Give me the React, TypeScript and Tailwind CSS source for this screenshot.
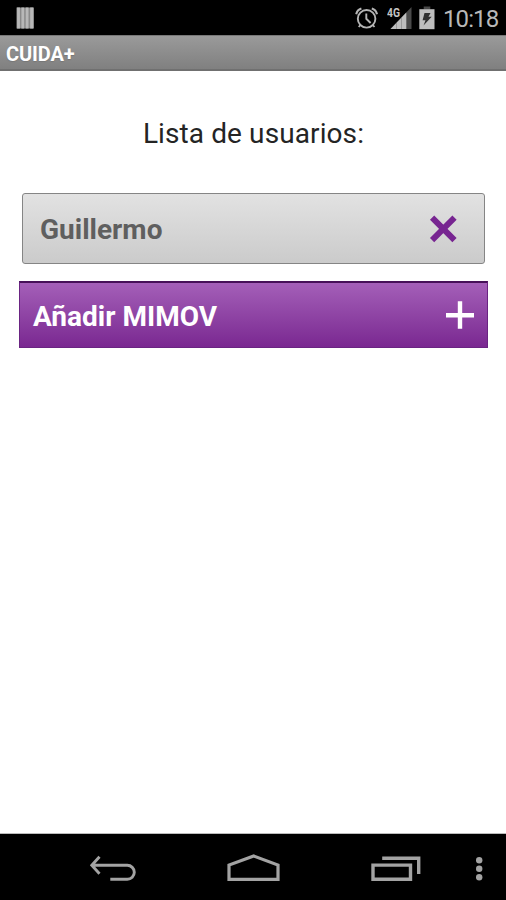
import React from 'react';

const users = [{ id: 1, name: 'Guillermo' }];

function StatusBar() {
  return (
    <div className="h-[35px] shrink-0 bg-black flex items-center justify-between pl-[16px] pr-[7px]">
      <svg width="18" height="22" viewBox="0 0 18 22" className="block">
        <rect x="0.5" y="0.5" width="17.5" height="21" fill="#8a8a8a" />
        <path d="M2.5 .5v21M6.8 .5v21M11.1 .5v21M15.6 .5v21" stroke="#b8b8b8" strokeWidth="2.8" />
      </svg>
      <div className="flex items-center">
        {/* Alarm */}
        <svg width="24" height="24" viewBox="0 0 24 24" fill="none" stroke="#b4b4b4" className="mr-[8px]">
          <circle cx="11.6" cy="12.8" r="8.8" strokeWidth="1.9" />
          <path d="M11.3 7.5v5.3l4.3 4.2" strokeWidth="1.9" />
          <path d="M1.2 8.2C1.8 5.5 3.6 3.5 6.4 2.6M22 8.2C21.4 5.5 19.6 3.5 16.8 2.6" strokeWidth="2.1" />
          <path d="M5.4 19l-1.7 2M17.8 19l1.7 2" strokeWidth="1.8" />
        </svg>
        {/* 4G signal */}
        <svg width="25" height="24" viewBox="0 0 25 24" className="mr-[7px]">
          <path d="M3.5 23L24.5 1v22z" fill="#4a4a4a" />
          <path d="M3.5 23L19.3 6.4V23z" fill="#bdbdbd" />
          <path d="M9.5 17v6M14.5 12v11" stroke="#999" strokeWidth="1" />
          <text x="0" y="11" textLength="13" lengthAdjust="spacingAndGlyphs" fill="#c4c4c4" className="font-['Roboto',sans-serif] text-[13px] font-bold">4G</text>
        </svg>
        {/* Charging battery */}
        <svg width="16" height="24" viewBox="0 0 16 24" className="mr-[8px]">
          <path d="M4.7 .5h6.6v3H4.7z" fill="#484848" />
          <path d="M.3 3.2h15.2V23.2H.3z" fill="#bebebe" />
          <path d="M5.5 7h6l-2 3.8h3.2L4.5 19.6l2-5.4H3.6z" fill="#303030" />
        </svg>
        <span className="text-[24px] leading-[33px] text-[#b8b8b8] w-[56px] tracking-[-0.9px] whitespace-nowrap pt-[3px]">10:18</span>
      </div>
    </div>
  );
}

function TitleBar() {
  return (
    <header className="h-[36px] shrink-0 bg-linear-to-b from-[#9a9a9a] to-[#808080] border-t border-[#777] border-b-2 border-b-[#707070] pl-[6px] pt-[2px] flex items-center">
      <h1 className="text-[20px] leading-none font-bold text-white tracking-[-0.1px] [text-shadow:0_1px_1px_#777]">CUIDA+</h1>
    </header>
  );
}

function NavigationBar() {
  return (
    <nav className="h-[67px] shrink-0 bg-black border-t border-[#bbb] flex items-center pt-[4px] pl-[89px]">
      <button type="button" aria-label="Atrás">
        <svg width="48" height="30" viewBox="0 0 48 30" fill="none" stroke="#a3a3a3" strokeWidth="2.9" className="block">
          <path d="M10.5 2.8L2.8 11.3l7.7 8.4M3 11.3h35.3a7 7 0 010 14H21.3" />
        </svg>
      </button>
      <button type="button" aria-label="Inicio" className="ml-[90px]">
        <svg width="54" height="30" viewBox="0 0 54 30" fill="none" stroke="#a3a3a3" strokeWidth="3.2" className="block">
          <path d="M2 25.4V11L26.7 2l24.3 9v14.4z" />
        </svg>
      </button>
      <button type="button" aria-label="Recientes" className="ml-[90px]">
        <svg width="51" height="30" viewBox="0 0 51 30" fill="none" stroke="#a3a3a3" strokeWidth="3.4" className="block">
          <path d="M2 11.1h37.5v14.2H2zM11.2 4.2h36.5v15.8" />
        </svg>
      </button>
      <button type="button" aria-label="Menú" className="ml-[53px]">
        <svg width="8" height="30" viewBox="0 0 8 30" fill="#a3a3a3" className="block">
          <circle cx="4.2" cy="6.2" r="3.2" />
          <circle cx="4.2" cy="14.7" r="3.2" />
          <circle cx="4.2" cy="23.2" r="3.2" />
        </svg>
      </button>
    </nav>
  );
}

export default function App() {
  return (
    <div className="w-full h-screen bg-white flex flex-col overflow-hidden font-['Roboto',sans-serif]">
      <StatusBar />
      <TitleBar />
      <main className="flex-1 min-h-0 pl-[19px] pr-[18px] pt-[43px]">
        <h2 className="text-center text-[28px] leading-[40px] text-[#242424] whitespace-nowrap tracking-[0.1px]">Lista de usuarios:</h2>
        <ul className="mt-[39px] pl-[3px] pr-[3px]">
          {users.map((user) => (
            <li
              key={user.id}
              className="h-[71px] flex items-center justify-between pl-[17px] pr-[27px] rounded-[3px] border border-[#858585] bg-linear-to-b from-[#e2e2e2] to-[#cbcbcb]"
            >
              <span className="text-[28px] leading-none font-bold text-[#5f5f5f] pt-[2px]">{user.name}</span>
              <button type="button" aria-label="Eliminar">
                <svg width="28" height="28" viewBox="0 0 28 28" stroke="#772591" strokeWidth="6" className="block">
                  <path d="M3.1 2.7l22.4 22.4M25.5 2.7L3.1 25.1" />
                </svg>
              </button>
            </li>
          ))}
        </ul>
        <button
          type="button"
          className="mt-[17px] w-full h-[67px] flex items-center justify-between pl-[13px] pr-[13px] border border-[#6a2482] border-t-2 border-t-[#461058] bg-linear-to-b from-[#a45fb8] to-[#7a2791]"
        >
          <span className="text-[28px] leading-none font-bold text-white pt-[3px]">Añadir MIMOV</span>
          <svg width="29" height="28" viewBox="0 0 29 28" stroke="#fff" strokeWidth="4.4" className="block">
            <path d="M15 .3v27.4M1 14.2h28" />
          </svg>
        </button>
      </main>
      <NavigationBar />
    </div>
  );
}
